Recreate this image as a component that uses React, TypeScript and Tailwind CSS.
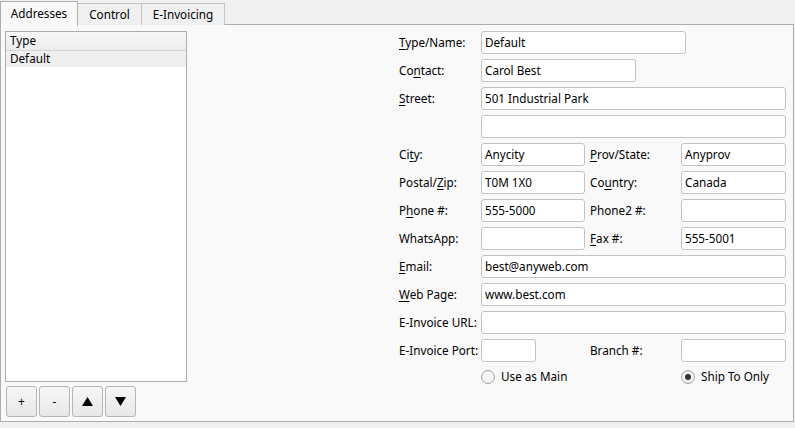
import React from 'react';

const font = { fontFamily: '"Noto Sans", "Open Sans", Arial, sans-serif' };

// label with an underlined mnemonic letter
function Label({ text, u, className = '' }: { text: string; u?: number; className?: string }) {
  return (
    <div className={`flex items-center text-[11.7px] text-black whitespace-nowrap ${className}`}>
      {u === undefined ? (
        text
      ) : (
        <span>
          {text.slice(0, u)}
          <span className="underline underline-offset-2">{text[u]}</span>
          {text.slice(u + 1)}
        </span>
      )}
    </div>
  );
}

function Field({ value = '', className = '' }: { value?: string; className?: string }) {
  return (
    <div
      className={`h-[23px] rounded-[3px] border border-[#c3c3c3] bg-white px-[3px] flex items-center text-[11.7px] text-black ${className}`}
    >
      {value}
    </div>
  );
}

function Radio({ checked, label }: { checked?: boolean; label: string }) {
  return (
    <div className="flex items-center gap-[6px] text-[11.7px] text-black">
      <span className="w-[14px] h-[14px] rounded-full border border-[#a0a0a0] bg-[#f4f4f4] flex items-center justify-center">
        {checked && <span className="w-[6px] h-[6px] rounded-full bg-[#333]" />}
      </span>
      {label}
    </div>
  );
}

export default function App() {
  const btn =
    'w-[31px] h-[31px] rounded-[3px] border border-[#b5b5b5] bg-gradient-to-b from-[#f6f6f6] to-[#e8e8e8] flex items-center justify-center text-[12px] text-black';

  return (
    <div className="w-[795px] h-[428px] bg-[#f0f0f0] overflow-hidden" style={font}>
      {/* tabs */}
      <div className="h-[25px] flex items-end relative z-10">
        <div className="h-[25px] w-[78px] border border-b-0 border-[#adadad] bg-[#f9f9f9] flex items-center justify-center text-[11.7px] text-black -mb-px">
          Addresses
        </div>
        <div className="h-[22px] w-[64px] border border-b-0 border-l-0 border-[#c4c4c4] bg-[#f0f0f0] flex items-center justify-center text-[11.7px] text-black">
          Control
        </div>
        <div className="h-[22px] w-[83px] border border-b-0 border-l-0 border-[#c4c4c4] bg-[#f0f0f0] flex items-center justify-center text-[11.7px] text-black">
          E-Invoicing
        </div>
      </div>

      {/* panel */}
      <div className="w-[794px] h-[398px] -mt-px border border-[#adadad] bg-[#f9f9f9] flex">
        {/* list side */}
        <div className="pl-[4px] pt-[6px] flex flex-col">
          <div className="w-[182px] h-[351px] border border-[#adadad] bg-white flex flex-col">
            <div className="h-[19px] border-b border-[#d5d5d5] bg-gradient-to-b from-[#f7f7f7] to-[#ececec] flex items-center pl-[4px] text-[11.7px] text-black">
              Type
            </div>
            <div className="h-[16px] bg-[#efefef] flex items-center pl-[4px] text-[11.7px] text-black">Default</div>
          </div>
          <div className="flex gap-[2px] mt-[4px] ml-[1px]">
            <div className={btn}>+</div>
            <div className={btn}>-</div>
            <div className={btn}>
              <svg width="11" height="9" viewBox="0 0 11 9">
                <path d="M5.5 0 L11 9 L0 9 Z" fill="#000" />
              </svg>
            </div>
            <div className={btn}>
              <svg width="11" height="9" viewBox="0 0 11 9">
                <path d="M0 0 L11 0 L5.5 9 Z" fill="#000" />
              </svg>
            </div>
          </div>
        </div>

        {/* form side */}
        <div className="ml-auto mr-[7px] pt-[6px]">
          <div className="grid grid-cols-[82px_104px_96px_105px] auto-rows-[23px] gap-y-[5px]">
            <Label text="Type/Name:" u={0} />
            <div className="col-span-3">
              <Field value="Default" className="w-[205px]" />
            </div>

            <Label text="Contact:" u={2} />
            <div className="col-span-3">
              <Field value="Carol Best" className="w-[155px]" />
            </div>

            <Label text="Street:" u={0} />
            <Field value="501 Industrial Park" className="col-span-3" />

            <div />
            <Field className="col-span-3" />

            <Label text="City:" u={2} />
            <Field value="Anycity" />
            <Label text="Prov/State:" u={0} className="pl-[5px]" />
            <Field value="Anyprov" />

            <Label text="Postal/Zip:" u={7} />
            <Field value="T0M 1X0" />
            <Label text="Country:" u={2} className="pl-[5px]" />
            <Field value="Canada" />

            <Label text="Phone #:" u={1} />
            <Field value="555-5000" />
            <Label text="Phone2 #:" className="pl-[5px]" />
            <Field />

            <Label text="WhatsApp:" />
            <Field />
            <Label text="Fax #:" u={0} className="pl-[5px]" />
            <Field value="555-5001" />

            <Label text="Email:" u={0} />
            <Field value="best@anyweb.com" className="col-span-3" />

            <Label text="Web Page:" u={0} />
            <Field value="www.best.com" className="col-span-3" />

            <Label text="E-Invoice URL:" />
            <Field className="col-span-3" />

            <Label text="E-Invoice Port:" />
            <Field className="w-[55px]" />
            <Label text="Branch #:" className="pl-[5px]" />
            <Field />
          </div>

          <div className="grid grid-cols-[82px_200px_105px] mt-[6px]">
            <div />
            <Radio label="Use as Main" />
            <Radio checked label="Ship To Only" />
          </div>
        </div>
      </div>
    </div>
  );
}
